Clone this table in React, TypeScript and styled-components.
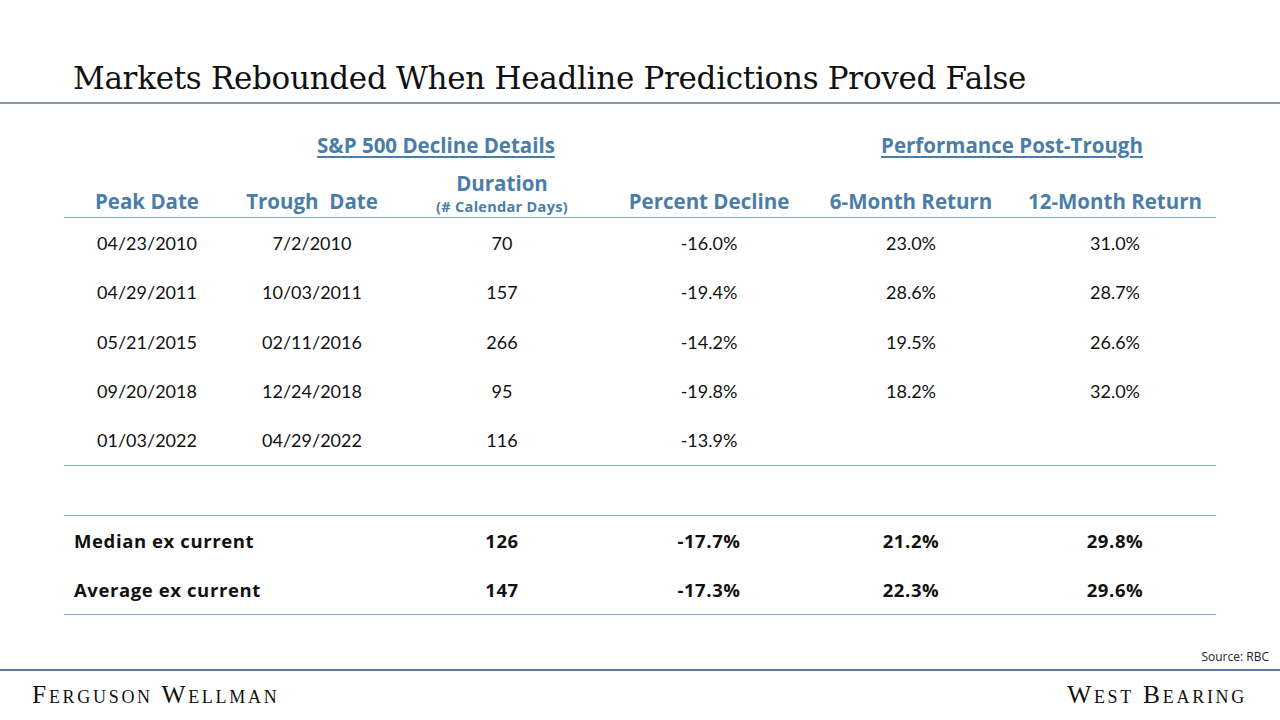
import React from "react";
import styled, { createGlobalStyle } from "styled-components";

const Global = createGlobalStyle`
  html, body { margin: 0; padding: 0; background: #fff; }
  body { font-family: Lato, "Open Sans", sans-serif; }
`;

const COLS = "166px 164px 216px 198px 206px 202px";
const BLUE = "#4a7ea8";
const LINE = "#86abc9";
const BOLD_FONT = `"Open Sans", Lato, sans-serif`;

const Page = styled.div`
  width: 1280px;
  height: 720px;
  display: flex;
  flex-direction: column;
  background: #fff;
  overflow: hidden;
`;

const TitleBar = styled.header`
  height: 104px;
  border-bottom: 2px solid #8799ab;
  display: flex;
  align-items: flex-end;
  padding-left: 73px;
  box-sizing: border-box;
`;

const Title = styled.h1`
  margin: 0 0 6px 0;
  font-family: "DejaVu Serif", "Liberation Serif", serif;
  font-weight: 400;
  font-size: 31px;
  color: #111;
  letter-spacing: -0.3px;
`;

const Table = styled.section`
  margin: 18px 64px 0;
  display: flex;
  flex-direction: column;
`;

const Grid = styled.div<{ $height: number; $line?: boolean }>`
  display: grid;
  grid-template-columns: ${COLS};
  height: ${(p) => p.$height}px;
  align-items: center;
  border-bottom: ${(p) => (p.$line ? `1.5px solid ${LINE}` : "none")};
  box-sizing: border-box;
`;

const GroupTitle = styled.div<{ $span: string }>`
  grid-column: ${(p) => p.$span};
  text-align: center;
  color: ${BLUE};
  font-family: ${BOLD_FONT};
  font-weight: 700;
  font-size: 20.5px;
  text-decoration: underline;
  text-underline-offset: 3px;
  text-decoration-thickness: 1.5px;
`;

const HeadCell = styled.div<{ $stacked?: boolean }>`
  align-self: end;
  padding-bottom: ${(p) => (p.$stacked ? "1px" : "2px")};
  text-align: center;
  color: ${BLUE};
  font-family: ${BOLD_FONT};
  font-weight: 700;
  font-size: 20.5px;
  line-height: 28px;
  white-space: nowrap;
  display: flex;
  flex-direction: column;
  align-items: center;
`;

const HeadLine = styled.span`
  line-height: 28px;
`;

const SubHead = styled.span`
  font-size: 14.5px;
  line-height: 19px;
  letter-spacing: 0.3px;
`;

const Cell = styled.div<{ $bold?: boolean; $left?: boolean }>`
  text-align: ${(p) => (p.$left ? "left" : "center")};
  padding-left: ${(p) => (p.$left ? "10px" : "0")};
  font-family: ${(p) => (p.$bold ? BOLD_FONT : `Lato, sans-serif`)};
  font-size: ${(p) => (p.$bold ? "18.5px" : "18px")};
  letter-spacing: ${(p) => (p.$bold ? "0.6px" : "0")};
  font-weight: ${(p) => (p.$bold ? 700 : 400)};
  color: #111;
  white-space: nowrap;
`;

const LabelCell = styled(Cell)`
  grid-column: span 2;
`;

const Spacer = styled.div`
  height: 50px;
  border-bottom: 1.5px solid ${LINE};
  box-sizing: border-box;
`;

const Source = styled.div`
  margin-top: 33px;
  padding-right: 11px;
  text-align: right;
  font-family: "Open Sans", sans-serif;
  font-size: 12px;
  color: #222;
  height: 21px;
`;

const Footer = styled.footer`
  border-top: 2px solid #5d7c98;
  display: flex;
  justify-content: space-between;
  padding: 9px 33px 0 32px;
`;

const Brand = styled.div`
  font-family: "Liberation Serif", serif;
  font-variant: small-caps;
  font-size: 25.5px;
  letter-spacing: 2.7px;
  color: #111;
`;

const rows = [
  ["04/23/2010", "7/2/2010", "70", "-16.0%", "23.0%", "31.0%"],
  ["04/29/2011", "10/03/2011", "157", "-19.4%", "28.6%", "28.7%"],
  ["05/21/2015", "02/11/2016", "266", "-14.2%", "19.5%", "26.6%"],
  ["09/20/2018", "12/24/2018", "95", "-19.8%", "18.2%", "32.0%"],
  ["01/03/2022", "04/29/2022", "116", "-13.9%", "", ""],
];

const summary = [
  ["Median ex current", "126", "-17.7%", "21.2%", "29.8%"],
  ["Average ex current", "147", "-17.3%", "22.3%", "29.6%"],
];

export default function App() {
  return (
    <Page>
      <Global />
      <TitleBar>
        <Title>Markets Rebounded When Headline Predictions Proved False</Title>
      </TitleBar>
      <Table>
        <Grid $height={46}>
          <GroupTitle $span="1 / 5">S&amp;P 500 Decline Details</GroupTitle>
          <GroupTitle $span="5 / 7">Performance Post-Trough</GroupTitle>
        </Grid>
        <Grid $height={50} $line>
          <HeadCell>Peak Date</HeadCell>
          <HeadCell>Trough&nbsp; Date</HeadCell>
          <HeadCell $stacked>
            <HeadLine>Duration</HeadLine>
            <SubHead>(# Calendar Days)</SubHead>
          </HeadCell>
          <HeadCell>Percent Decline</HeadCell>
          <HeadCell>6-Month Return</HeadCell>
          <HeadCell>12-Month Return</HeadCell>
        </Grid>
        {rows.map((r, i) => (
          <Grid key={i} $height={49.5} $line={i === rows.length - 1}>
            {r.map((c, j) => (
              <Cell key={j}>{c}</Cell>
            ))}
          </Grid>
        ))}
        <Spacer />
        {summary.map((r, i) => (
          <Grid key={i} $height={49.5} $line={i === summary.length - 1}>
            <LabelCell $bold $left>{r[0]}</LabelCell>
            {r.slice(1).map((c, j) => (
              <Cell key={j} $bold>{c}</Cell>
            ))}
          </Grid>
        ))}
      </Table>
      <Source>Source: RBC</Source>
      <Footer>
        <Brand>Ferguson Wellman</Brand>
        <Brand>West Bearing</Brand>
      </Footer>
    </Page>
  );
}
